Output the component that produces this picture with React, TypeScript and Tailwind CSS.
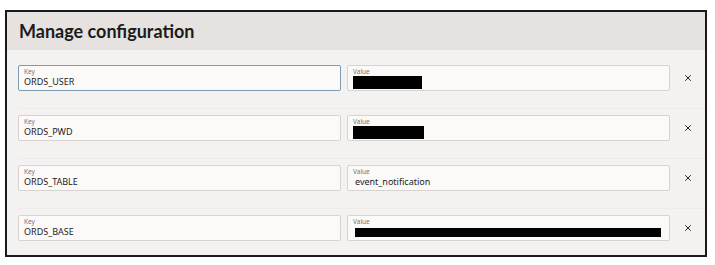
import { X } from 'lucide-react';

interface ConfigRow {
  key: string;
  value?: string;
  redactWidth?: number;
  focused?: boolean;
}

const rows: ConfigRow[] = [
  { key: 'ORDS_USER', redactWidth: 69, focused: true },
  { key: 'ORDS_PWD', redactWidth: 71 },
  { key: 'ORDS_TABLE', value: 'event_notification' },
  { key: 'ORDS_BASE', redactWidth: 306 },
];

function Field({ label, children, focused }: { label: string; children: React.ReactNode; focused?: boolean }) {
  return (
    <div
      className={
        'flex h-[26px] w-[323px] shrink-0 flex-col justify-center rounded-[2px] border bg-[#fbfaf9] px-[5px] ' +
        (focused ? 'border-[#7d9bb0]' : 'border-[#d6d3d0]')
      }
    >
      <span className="text-[6.5px] leading-[8px] text-[#757575]">{label}</span>
      <div className="flex h-[12px] items-center text-[9px] leading-[12px] text-[#222]">{children}</div>
    </div>
  );
}

export default function App() {
  return (
    <div className="h-[265px] w-[715px] bg-white pl-[5px] pt-[10px] font-['Noto_Sans',sans-serif]">
      <div className="flex h-[247px] w-[702px] flex-col overflow-hidden border-2 border-[#1a1a1a]">
        <div className="flex h-[38px] shrink-0 items-center bg-[#e5e2df] pl-[12px]">
          <h1 className="font-['Lato',sans-serif] text-[18px] font-bold text-[#1c1c1c]">Manage configuration</h1>
        </div>
        <div className="flex flex-1 flex-col bg-[#f4f2f0] pl-[11px] pt-[8px]">
          {rows.map((row, index) => (
            <div
              className={
                'flex items-center pb-[17px] ' +
                (index > 0 ? 'border-t border-[#eeebe8] pt-[6px]' : 'pt-[7px]')
              }
              key={row.key}
            >
              <Field focused={row.focused} label="Key">
                {row.key}
              </Field>
              <div className="ml-[6px] shrink-0">
                <Field label="Value">
                  {row.value ? (
                    <span className="pl-[2px]">{row.value}</span>
                  ) : (
                    <div
                      className={
                        'bg-black ' +
                        (row.redactWidth && row.redactWidth > 100 ? 'ml-[2px] h-[9px]' : 'mt-[1px] h-[13px]')
                      }
                      style={{ width: row.redactWidth }}
                    />
                  )}
                </Field>
              </div>
              <div className="flex w-[35px] shrink-0 justify-center">
                <X className="h-[10px] w-[10px] text-[#2a2a2a]" strokeWidth={2.4} />
              </div>
            </div>
          ))}
        </div>
      </div>
    </div>
  );
}
